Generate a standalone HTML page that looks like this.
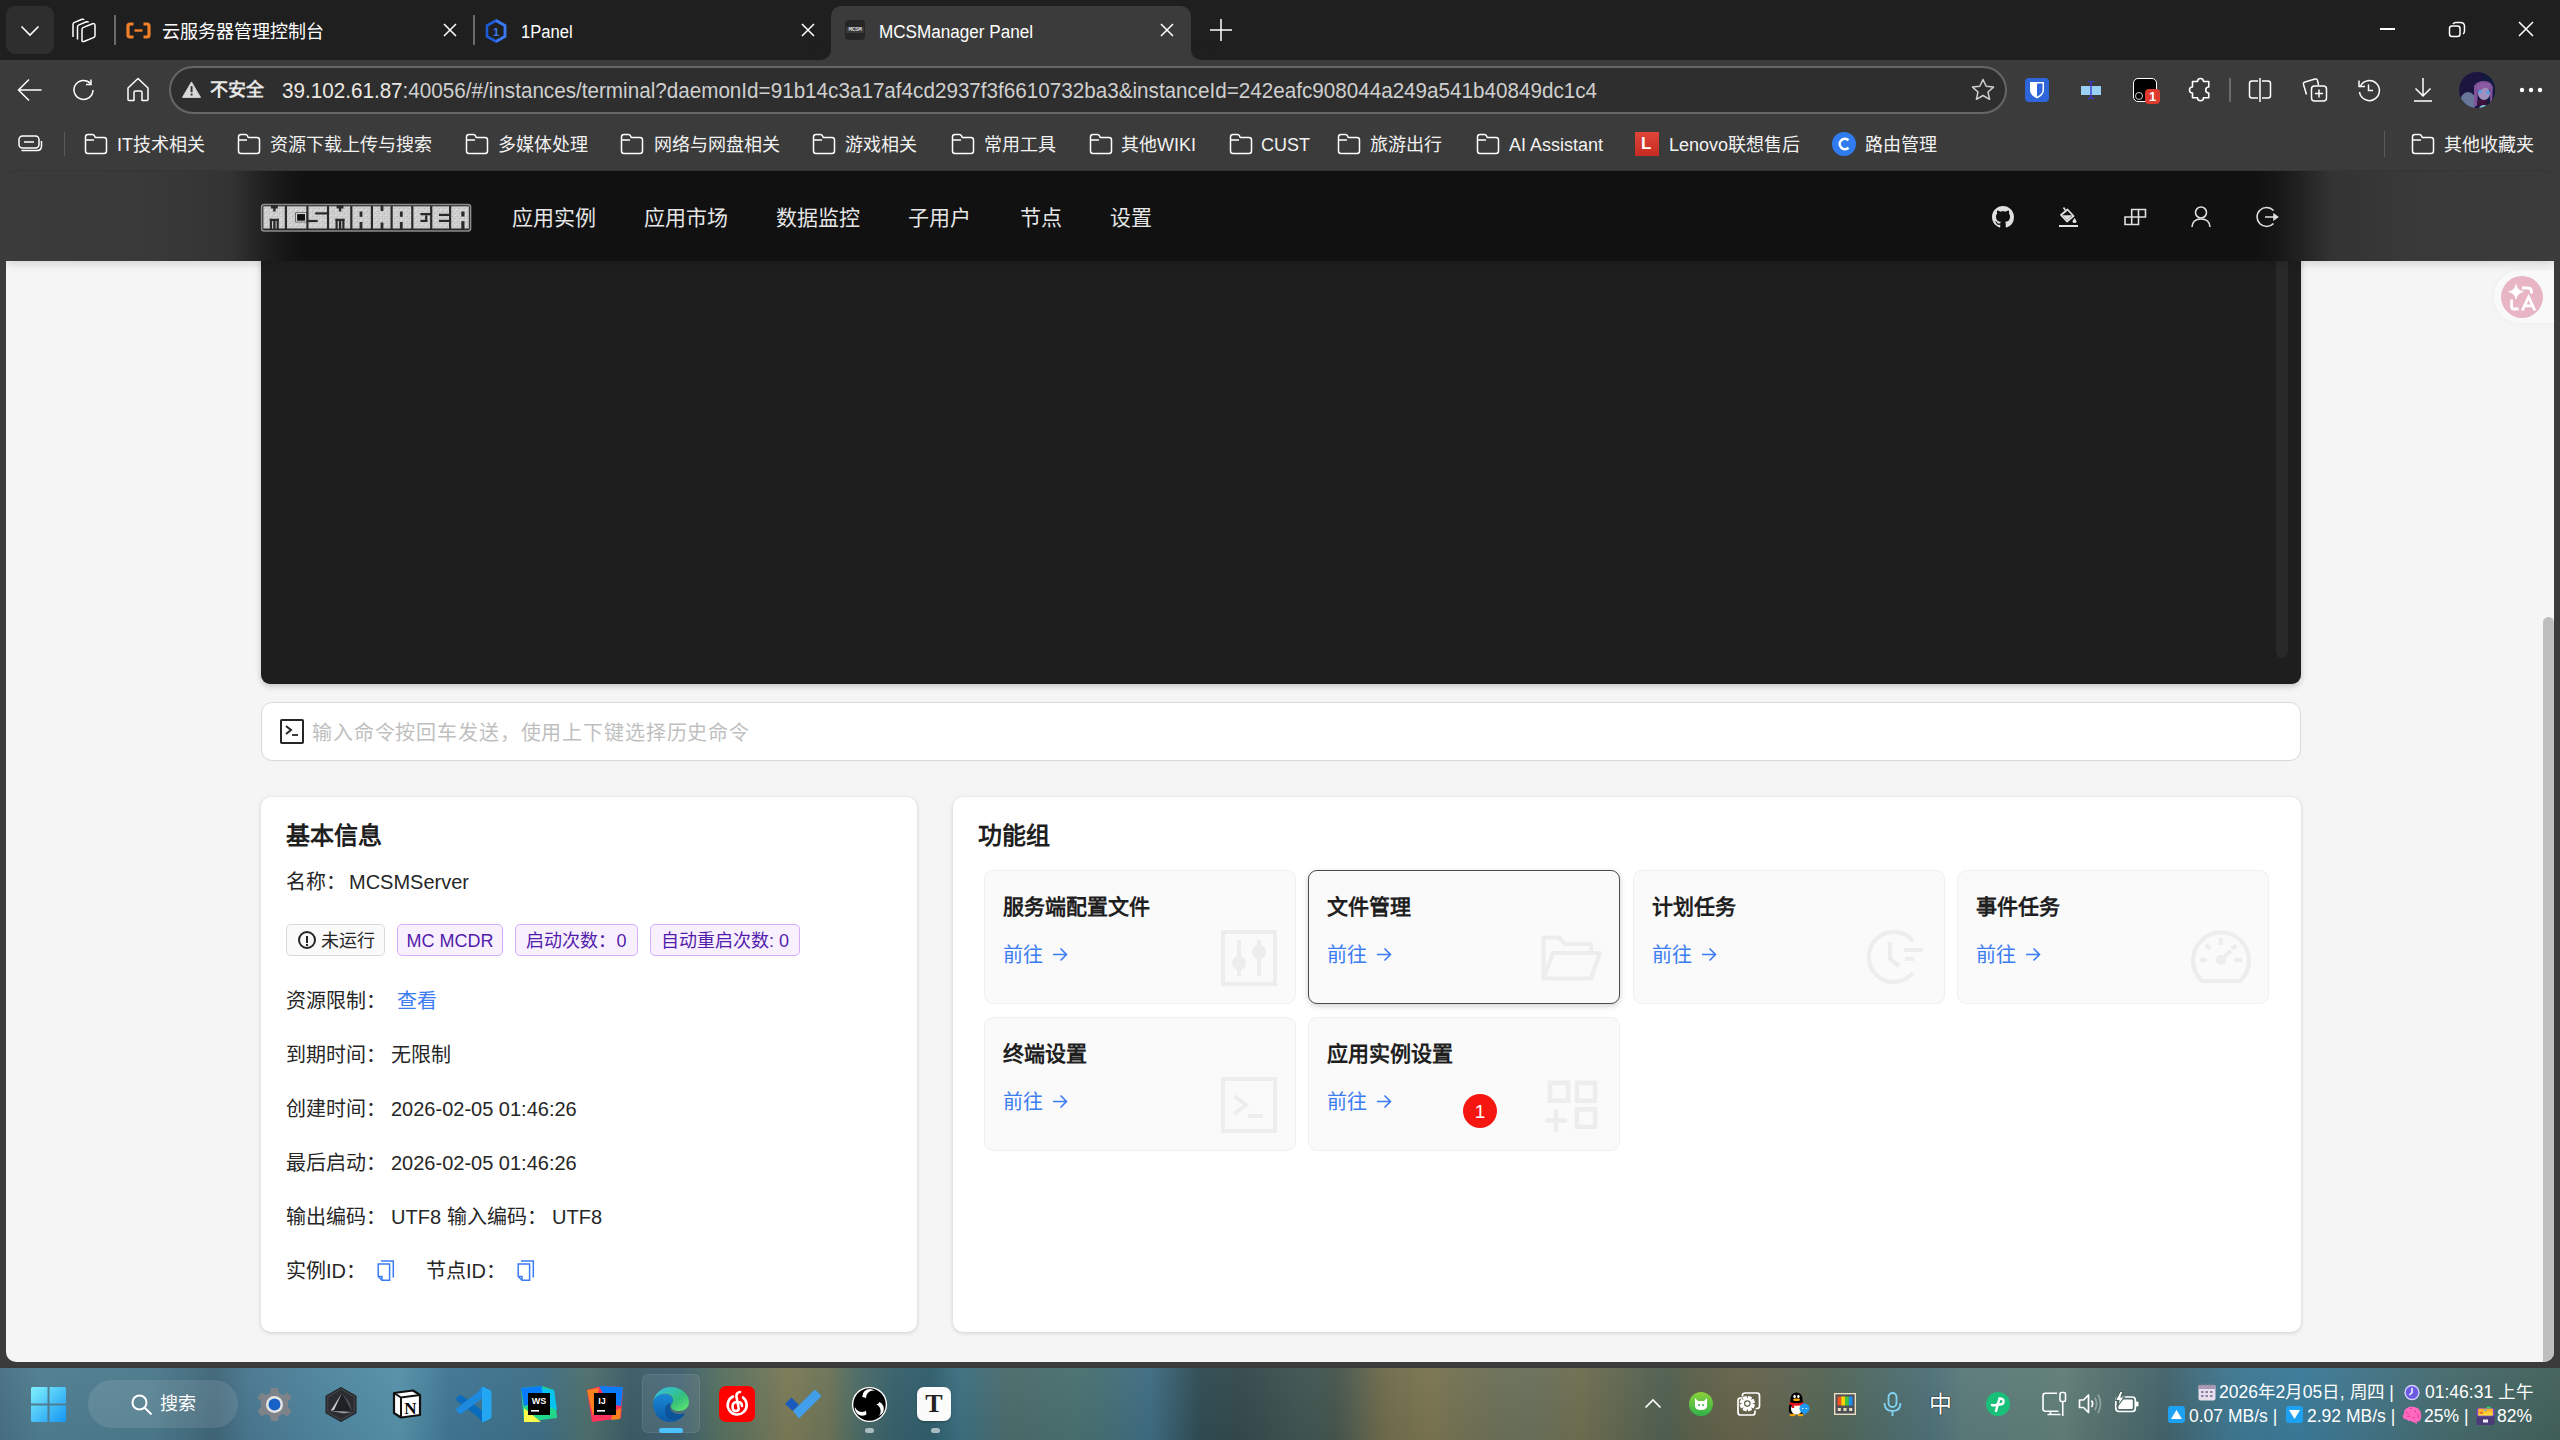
<!DOCTYPE html>
<html lang="zh-CN"><head><meta charset="utf-8">
<style>
*{box-sizing:border-box;margin:0;padding:0}
html,body{width:2560px;height:1440px;overflow:hidden;background:#1f1f1f;font-family:"Liberation Sans",sans-serif}
.a{position:absolute}
svg{display:block}
.w{color:#fff}
/* chrome */
#tabs{left:0;top:0;width:2560px;height:60px;background:#1f1f1f}
#tool{left:0;top:60px;width:2560px;height:1308px;background:#3b3b3b}
.tt{font-size:18px;line-height:20px;color:#fff;white-space:nowrap}
.bk{font-size:18px;line-height:20px;color:#f2f2f2;white-space:nowrap}
/* content */
#content{left:6px;top:170px;width:2548px;height:1192px;background:linear-gradient(#3b3b3b 0,#3b3b3b 91px,#f5f5f5 91px);border-radius:10px;overflow:hidden}
#hdr{z-index:2;box-shadow:0 3px 8px rgba(0,0,0,.13);left:0;top:0;width:2548px;height:91px;border-top:1px solid #353535;border-radius:10px 10px 0 0;background:linear-gradient(90deg,#3b3b3b 0px,#393939 150px,#333 225px,#222 255px,#161616 280px,#111111 300px,#111111 2250px,#161616 2270px,#222 2295px,#333 2325px,#393939 2400px,#3b3b3b 2548px)}
.nav{font-size:21px;line-height:24px;color:#e6e6e6;white-space:nowrap}
#taskbar{left:0;top:1368px;width:2560px;height:72px;background:linear-gradient(90deg,#477083 0px,#4f7d90 40px,#4c7a8c 150px,#3f6678 215px,#4a7890 250px,#4f86a0 330px,#5590a8 400px,#3f7592 450px,#3e6f86 540px,#4e6e6a 590px,#3a5c66 630px,#3f6070 680px,#55705f 720px,#7b7a56 790px,#6a7358 830px,#4a6a66 860px,#36606b 895px,#305d6b 930px,#3c6f80 960px,#4b6b6b 1010px,#48706f 1080px,#3e6c82 1150px,#2f4b52 1200px,#33494b 1240px,#3e5552 1300px,#45564e 1335px,#6f6c4c 1385px,#7a7450 1430px,#6e7056 1480px,#68705a 1530px,#6e6e50 1580px,#5e6650 1625px,#4f5f50 1665px,#5a604a 1690px,#66634a 1740px,#5f6450 1780px,#536656 1830px,#4f6a64 1870px,#4d7078 1930px,#5a7a7a 1963px,#5f7d76 2063px,#55706e 2104px,#43636a 2166px,#3e7790 2230px,#3a7a98 2300px,#41758a 2354px,#466a6c 2448px,#42605a 2560px)}

.card{background:#fff;border-radius:10px;box-shadow:0 1px 4px rgba(0,0,0,.16)}
.ct{font-size:24px;line-height:28px;font-weight:bold;color:#1f1f1f;white-space:nowrap}
.it{font-size:20px;line-height:24px;color:#262626;white-space:nowrap}
.tag{height:32px;border-radius:5px;font-size:18px;line-height:33px;white-space:nowrap;padding:0 10px;border:1px solid #d9d9d9;background:#fafafa;color:#262626}
.tp{border-color:#d3adf7;background:#f9f0ff;color:#531dab}
.sc{width:312px;height:134px;background:#fafafa;border:1px solid #f0f0f0;border-radius:9px;overflow:hidden}
.sct{left:18px;top:24px;font-size:21px;line-height:24px;font-weight:bold;color:#1f1f1f;white-space:nowrap}
.scl{left:18px;top:72px;font-size:20px;line-height:24px;color:#3b7cf2;white-space:nowrap}
i{font-style:normal;display:inline-block;width:1em;text-align:center}
.ph i{width:calc(1em + 0.86px)}
</style></head><body>
<div id="tabs" class="a">
  <div class="a" style="left:6px;top:6px;width:48px;height:48px;border-radius:9px;background:#2e2e2e"></div>
  <svg class="a" style="left:20px;top:25px" width="20" height="12" viewBox="0 0 20 12"><path d="M1.5 1.5 L10 10 L18.5 1.5" fill="none" stroke="#fff" stroke-width="1.6"/></svg>
  <svg class="a" style="left:71px;top:17px" width="26" height="26" viewBox="0 0 26 26" fill="none" stroke="#fff" stroke-width="1.5" stroke-linejoin="round"><path d="M2 20 V7.5 Q2 6 3.5 5.4 L11 2.3 Q12.5 1.8 13 3"/><path d="M6.5 22.5 V10 Q6.5 8.5 8 7.9 L15.5 4.8 Q17 4.3 17.5 5.5"/><path d="M11 23.5 V12.5 Q11 11 12.5 10.4 L21.5 6.8 Q24 6 24 8.5 V18.5 Q24 20 22.5 20.6 L13.5 24.3 Q11 25.2 11 23.5 Z"/></svg>
  <div class="a" style="left:114px;top:15px;width:2px;height:30px;background:#6b6b6b"></div>
  <svg class="a" style="left:126px;top:22px" width="25" height="17" viewBox="0 0 25 17"><path d="M7.5 2 H4 Q2 2 2 4 V13 Q2 15 4 15 H7.5" fill="none" stroke="#f0802a" stroke-width="3.2"/><path d="M17.5 2 H21 Q23 2 23 4 V13 Q23 15 21 15 H17.5" fill="none" stroke="#f0802a" stroke-width="3.2"/><rect x="8.5" y="7.3" width="8" height="2.4" fill="#f0802a"/></svg>
  <div class="a tt" style="left:162px;top:22px"><i>云</i><i>服</i><i>务</i><i>器</i><i>管</i><i>理</i><i>控</i><i>制</i><i>台</i></div>
  <svg class="a" style="left:443px;top:23px" width="14" height="14" viewBox="0 0 14 14"><path d="M1 1 L13 13 M13 1 L1 13" stroke="#fff" stroke-width="1.5"/></svg>
  <div class="a" style="left:473px;top:15px;width:2px;height:30px;background:#6b6b6b"></div>
  <svg class="a" style="left:485px;top:19px" width="22" height="24" viewBox="0 0 22 24"><path d="M11 1.5 L20 6.5 V17.5 L11 22.5 L2 17.5 V6.5 Z" fill="none" stroke="#1e5bd8" stroke-width="2.6"/><path d="M11 1.5 L20 6.5 V17.5 L11 22.5" fill="none" stroke="#3a78f0" stroke-width="2.6"/><text x="11" y="16.5" font-size="11" font-family="Liberation Sans" text-anchor="middle" fill="#3a78f0" font-weight="bold">1</text></svg>
  <div class="a tt" style="left:521px;top:22px;transform:scaleX(.92);transform-origin:0 0">1Panel</div>
  <svg class="a" style="left:801px;top:23px" width="14" height="14" viewBox="0 0 14 14"><path d="M1 1 L13 13 M13 1 L1 13" stroke="#fff" stroke-width="1.5"/></svg>
  <!-- active tab -->
  <div class="a" style="left:831px;top:6px;width:360px;height:54px;background:#3b3b3b;border-radius:10px 10px 0 0"></div>
  <div class="a" style="left:821px;top:50px;width:10px;height:10px;background:#3b3b3b"></div>
  <div class="a" style="left:811px;top:40px;width:20px;height:20px;background:#1f1f1f;border-radius:50%"></div>
  <div class="a" style="left:1191px;top:50px;width:10px;height:10px;background:#3b3b3b"></div>
  <div class="a" style="left:1191px;top:40px;width:20px;height:20px;background:#1f1f1f;border-radius:50%"></div>
  <div class="a" style="left:845px;top:20px;width:20px;height:20px;border-radius:4px;background:#262626"></div>
  <div class="a" style="left:846px;top:27px;width:18px;height:6px;background:#3a3a3a"></div>
  <div class="a" style="left:845px;top:27px;width:20px;text-align:center;font:bold 6px/6px 'Liberation Mono',monospace;color:#d8d8d8;letter-spacing:-0.3px">MCSM</div>
  <div class="a tt" style="left:879px;top:22px;transform:scaleX(.95);transform-origin:0 0">MCSManager Panel</div>
  <svg class="a" style="left:1160px;top:23px" width="14" height="14" viewBox="0 0 14 14"><path d="M1 1 L13 13 M13 1 L1 13" stroke="#fff" stroke-width="1.5"/></svg>
  <svg class="a" style="left:1209px;top:18px" width="24" height="24" viewBox="0 0 24 24"><path d="M12 1 V23 M1 12 H23" stroke="#fff" stroke-width="1.5"/></svg>
  <!-- window controls -->
  <div class="a" style="left:2380px;top:28px;width:15px;height:2px;background:#fff"></div>
  <svg class="a" style="left:2448px;top:21px" width="18" height="17" viewBox="0 0 18 17" fill="none" stroke="#fff" stroke-width="1.5"><rect x="1.5" y="5" width="10.5" height="10.5" rx="2.5"/><path d="M5 3 Q6 1.5 8 1.5 H12.5 Q16.5 1.5 16.5 5.5 V10 Q16.5 12 15 13"/></svg>
  <svg class="a" style="left:2518px;top:21px" width="16" height="16" viewBox="0 0 16 16"><path d="M1 1 L15 15 M15 1 L1 15" stroke="#fff" stroke-width="1.5"/></svg>
</div>
<div id="tool" class="a">
  <svg class="a" style="left:17px;top:18px" width="26" height="24" viewBox="0 0 26 24" fill="none" stroke="#fff" stroke-width="1.5"><path d="M1.5 12 H24.5 M12 1.5 L1.5 12 L12 22.5"/></svg>
  <svg class="a" style="left:72px;top:18px" width="24" height="24" viewBox="0 0 24 24" fill="none" stroke="#fff" stroke-width="1.5"><path d="M21 12 A9.5 9.5 0 1 1 18.5 5.5"/><path d="M19 1.5 V6.5 H14"/></svg>
  <svg class="a" style="left:126px;top:17px" width="24" height="25" viewBox="0 0 24 25" fill="none" stroke="#fff" stroke-width="1.5" stroke-linejoin="round"><path d="M12 1.5 L22 11 V22.5 Q22 23.5 21 23.5 H16 V15.5 Q16 14 14.5 14 H9.5 Q8 14 8 15.5 V23.5 H3 Q2 23.5 2 22.5 V11 Z"/></svg>
  <div class="a" style="left:169px;top:6px;width:1838px;height:48px;border-radius:24px;background:#2e2e2e;border:2px solid #666"></div>
  <svg class="a" style="left:182px;top:21px" width="19" height="17.3" viewBox="0 0 22 20"><path d="M11 1 L21.5 19 H0.5 Z" fill="#d9d9d9" stroke="#d9d9d9" stroke-width="1" stroke-linejoin="round"/><rect x="10" y="6" width="2.2" height="7" fill="#2e2e2e"/><rect x="10" y="14.6" width="2.2" height="2.2" fill="#2e2e2e"/></svg>
  <div class="a" style="left:210px;top:19px;font-size:18px;line-height:22px;font-weight:bold;color:#e6e6e6"><i>不</i><i>安</i><i>全</i></div>
  <div class="a" id="url" style="left:282px;top:18px;font-size:20.67px;line-height:24px;color:#ebe8e2;white-space:nowrap;transform:scaleY(1.08)">39.102.61.87<span style="color:#cfcfcf">:40056/#/instances/terminal?daemonId=91b14c3a17af4cd2937f3f6610732ba3&amp;instanceId=242eafc908044a249a541b40849dc1c4</span></div>
  <svg class="a" style="left:1970px;top:17px" width="26" height="26" viewBox="0 0 26 26"><path d="M13 2.5 L16.2 9.3 L23.5 10.1 L18 15 L19.6 22.3 L13 18.5 L6.4 22.3 L8 15 L2.5 10.1 L9.8 9.3 Z" fill="none" stroke="#d0d0d0" stroke-width="1.5" stroke-linejoin="round"/></svg>
  <!-- extensions -->
  <div class="a" style="left:2025px;top:18px;width:24px;height:24px;border-radius:4px;background:#2f65db"></div>
  <svg class="a" style="left:2029px;top:21px" width="16" height="18" viewBox="0 0 16 18"><path d="M1 1 H15 V9 Q15 14 8 17.5 Q1 14 1 9 Z" fill="#fff"/><path d="M8 2.5 H13.5 V9 Q13.5 13 8 15.8 Z" fill="#2f65db"/></svg>
  <svg class="a" style="left:2080px;top:20px" width="22" height="20" viewBox="0 0 22 20"><rect x="1" y="6" width="20" height="9" fill="#9bd0f5"/><path d="M11 2 V18 M8 1 Q11 3 14 1 M8 19 Q11 17 14 19" stroke="#3a3ad0" stroke-width="1.4" fill="none"/></svg>
  <div class="a" style="left:2133px;top:18px;width:24px;height:24px;border-radius:5px;background:#000;border:1.5px solid #fff"></div>
  <div class="a" style="left:2135px;top:32px;width:8px;height:8px;border-radius:50%;border:1.3px solid #ccc"></div>
  <div class="a" style="left:2145px;top:29px;width:15px;height:15px;border-radius:4px;background:#e03a2f;color:#fff;font:bold 13px/15px 'Liberation Sans';text-align:center">1</div>
  <svg class="a" style="left:2186px;top:16px" width="26" height="28" viewBox="0 0 26 28" fill="none" stroke="#fff" stroke-width="1.6" stroke-linejoin="round"><path d="M6.5 5.5 H11.5 A3 3 0 0 1 17.5 5.5 H22.75 V11 A3 3 0 0 0 22.75 17 V21.75 H17.5 A3 3 0 0 1 11.5 21.75 H6.5 V17 A3 3 0 0 1 6.5 11 Z"/></svg>
  <div class="a" style="left:2229px;top:18px;width:2px;height:24px;background:#6b6b6b"></div>
  <svg class="a" style="left:2248px;top:17px" width="24" height="26" viewBox="0 0 24 26" fill="none" stroke="#fff" stroke-width="1.5"><path d="M10 4 H4 Q1.5 4 1.5 6.5 V18.5 Q1.5 21 4 21 H10 M14 4 H20 Q22.5 4 22.5 6.5 V18.5 Q22.5 21 20 21 H14 M12 1 V25"/></svg>
  <svg class="a" style="left:2302px;top:17px" width="27" height="26" viewBox="0 0 27 26" fill="none" stroke="#fff" stroke-width="1.5" stroke-linejoin="round"><path d="M4.5 17.5 L1.5 7.5 Q1 5.5 3 5 L13 2 Q15 1.5 15.5 3.5 L16.5 8"/><rect x="9.5" y="9" width="15" height="15" rx="3"/><path d="M17 12.5 V20.5 M13 16.5 H21"/></svg>
  <svg class="a" style="left:2356px;top:17px" width="26" height="26" viewBox="0 0 26 26" fill="none" stroke="#fff" stroke-width="1.5"><path d="M4.5 9 A10 10 0 1 1 3.5 15"/><path d="M3 3.5 V9.5 H9"/><path d="M12.5 7.5 V13.5 H17"/></svg>
  <svg class="a" style="left:2412px;top:17px" width="22" height="26" viewBox="0 0 22 26" fill="none" stroke="#fff" stroke-width="1.5"><path d="M11 1 V19 M3.5 11.5 L11 19 L18.5 11.5 M2 24 H20"/></svg>
  <svg class="a" style="left:2459px;top:12px" width="36" height="36" viewBox="0 0 36 36"><defs><clipPath id="avc"><circle cx="18" cy="18" r="18"/></clipPath></defs><g clip-path="url(#avc)"><rect width="36" height="36" fill="#1b1540"/><rect x="24" y="0" width="12" height="36" fill="#121a3e"/><ellipse cx="9" cy="30" rx="8" ry="10" fill="#66779a"/><path d="M15 14 Q18 9 25 9 Q32 9 34 15 L33 30 L31 30 L31 18 L19 18 L18 34 L15 34 Z" fill="#80529a"/><ellipse cx="25" cy="21.5" rx="6" ry="6.5" fill="#9f90c0"/><path d="M18 13 Q24 9 31 12 L31 17 Q26 14 22 18 L18 18 Z" fill="#8a5aa2"/><ellipse cx="21" cy="19.5" rx="1.8" ry="1.5" fill="#4da3ea"/><ellipse cx="29" cy="20.5" rx="1.8" ry="1.5" fill="#4da3ea"/><rect x="19" y="28" width="9" height="6" fill="#3c1238"/><ellipse cx="25" cy="37" rx="5" ry="4" fill="#86c6e2"/><ellipse cx="32" cy="35" rx="4" ry="3" fill="#5d6e8c"/></g></svg>
  <svg class="a" style="left:2518px;top:27px" width="26" height="6" viewBox="0 0 26 6" fill="#fff"><circle cx="4" cy="3" r="2.2"/><circle cx="13" cy="3" r="2.2"/><circle cx="22" cy="3" r="2.2"/></svg>
<svg class="a" style="left:18px;top:75px" width="25" height="17" viewBox="0 0 25 17" fill="none" stroke="#fff" stroke-width="1.5"><rect x="1" y="1" width="20" height="12" rx="3.5"/><path d="M6 7 H16"/><path d="M3.5 15.5 H19 Q23.5 15.5 23.5 11 V6"/></svg><div class="a" style="left:64px;top:72px;width:1px;height:24px;background:#5a5a5a"></div><svg class="a" style="left:84px;top:73px" width="24" height="22" viewBox="0 0 24 22" fill="none" stroke="#fff" stroke-width="1.5" stroke-linejoin="round"><path d="M1.5 4 Q1.5 1.5 4 1.5 H8.5 Q9.8 1.5 10.5 2.8 L11.2 4.5 H20 Q22.5 4.5 22.5 7 V18 Q22.5 20.5 20 20.5 H4 Q1.5 20.5 1.5 18 Z M1.5 7 H10"/></svg><div class="a bk" style="left:117px;top:75px">IT<i>技</i><i>术</i><i>相</i><i>关</i></div><svg class="a" style="left:237px;top:73px" width="24" height="22" viewBox="0 0 24 22" fill="none" stroke="#fff" stroke-width="1.5" stroke-linejoin="round"><path d="M1.5 4 Q1.5 1.5 4 1.5 H8.5 Q9.8 1.5 10.5 2.8 L11.2 4.5 H20 Q22.5 4.5 22.5 7 V18 Q22.5 20.5 20 20.5 H4 Q1.5 20.5 1.5 18 Z M1.5 7 H10"/></svg><div class="a bk" style="left:270px;top:75px"><i>资</i><i>源</i><i>下</i><i>载</i><i>上</i><i>传</i><i>与</i><i>搜</i><i>索</i></div><svg class="a" style="left:465px;top:73px" width="24" height="22" viewBox="0 0 24 22" fill="none" stroke="#fff" stroke-width="1.5" stroke-linejoin="round"><path d="M1.5 4 Q1.5 1.5 4 1.5 H8.5 Q9.8 1.5 10.5 2.8 L11.2 4.5 H20 Q22.5 4.5 22.5 7 V18 Q22.5 20.5 20 20.5 H4 Q1.5 20.5 1.5 18 Z M1.5 7 H10"/></svg><div class="a bk" style="left:498px;top:75px"><i>多</i><i>媒</i><i>体</i><i>处</i><i>理</i></div><svg class="a" style="left:620px;top:73px" width="24" height="22" viewBox="0 0 24 22" fill="none" stroke="#fff" stroke-width="1.5" stroke-linejoin="round"><path d="M1.5 4 Q1.5 1.5 4 1.5 H8.5 Q9.8 1.5 10.5 2.8 L11.2 4.5 H20 Q22.5 4.5 22.5 7 V18 Q22.5 20.5 20 20.5 H4 Q1.5 20.5 1.5 18 Z M1.5 7 H10"/></svg><div class="a bk" style="left:654px;top:75px"><i>网</i><i>络</i><i>与</i><i>网</i><i>盘</i><i>相</i><i>关</i></div><svg class="a" style="left:812px;top:73px" width="24" height="22" viewBox="0 0 24 22" fill="none" stroke="#fff" stroke-width="1.5" stroke-linejoin="round"><path d="M1.5 4 Q1.5 1.5 4 1.5 H8.5 Q9.8 1.5 10.5 2.8 L11.2 4.5 H20 Q22.5 4.5 22.5 7 V18 Q22.5 20.5 20 20.5 H4 Q1.5 20.5 1.5 18 Z M1.5 7 H10"/></svg><div class="a bk" style="left:845px;top:75px"><i>游</i><i>戏</i><i>相</i><i>关</i></div><svg class="a" style="left:951px;top:73px" width="24" height="22" viewBox="0 0 24 22" fill="none" stroke="#fff" stroke-width="1.5" stroke-linejoin="round"><path d="M1.5 4 Q1.5 1.5 4 1.5 H8.5 Q9.8 1.5 10.5 2.8 L11.2 4.5 H20 Q22.5 4.5 22.5 7 V18 Q22.5 20.5 20 20.5 H4 Q1.5 20.5 1.5 18 Z M1.5 7 H10"/></svg><div class="a bk" style="left:984px;top:75px"><i>常</i><i>用</i><i>工</i><i>具</i></div><svg class="a" style="left:1089px;top:73px" width="24" height="22" viewBox="0 0 24 22" fill="none" stroke="#fff" stroke-width="1.5" stroke-linejoin="round"><path d="M1.5 4 Q1.5 1.5 4 1.5 H8.5 Q9.8 1.5 10.5 2.8 L11.2 4.5 H20 Q22.5 4.5 22.5 7 V18 Q22.5 20.5 20 20.5 H4 Q1.5 20.5 1.5 18 Z M1.5 7 H10"/></svg><div class="a bk" style="left:1121px;top:75px"><i>其</i><i>他</i>WIKI</div><svg class="a" style="left:1229px;top:73px" width="24" height="22" viewBox="0 0 24 22" fill="none" stroke="#fff" stroke-width="1.5" stroke-linejoin="round"><path d="M1.5 4 Q1.5 1.5 4 1.5 H8.5 Q9.8 1.5 10.5 2.8 L11.2 4.5 H20 Q22.5 4.5 22.5 7 V18 Q22.5 20.5 20 20.5 H4 Q1.5 20.5 1.5 18 Z M1.5 7 H10"/></svg><div class="a bk" style="left:1261px;top:75px">CUST</div><svg class="a" style="left:1337px;top:73px" width="24" height="22" viewBox="0 0 24 22" fill="none" stroke="#fff" stroke-width="1.5" stroke-linejoin="round"><path d="M1.5 4 Q1.5 1.5 4 1.5 H8.5 Q9.8 1.5 10.5 2.8 L11.2 4.5 H20 Q22.5 4.5 22.5 7 V18 Q22.5 20.5 20 20.5 H4 Q1.5 20.5 1.5 18 Z M1.5 7 H10"/></svg><div class="a bk" style="left:1370px;top:75px"><i>旅</i><i>游</i><i>出</i><i>行</i></div><svg class="a" style="left:1476px;top:73px" width="24" height="22" viewBox="0 0 24 22" fill="none" stroke="#fff" stroke-width="1.5" stroke-linejoin="round"><path d="M1.5 4 Q1.5 1.5 4 1.5 H8.5 Q9.8 1.5 10.5 2.8 L11.2 4.5 H20 Q22.5 4.5 22.5 7 V18 Q22.5 20.5 20 20.5 H4 Q1.5 20.5 1.5 18 Z M1.5 7 H10"/></svg><div class="a bk" style="left:1509px;top:75px">AI Assistant</div><svg class="a" style="left:2411px;top:73px" width="24" height="22" viewBox="0 0 24 22" fill="none" stroke="#fff" stroke-width="1.5" stroke-linejoin="round"><path d="M1.5 4 Q1.5 1.5 4 1.5 H8.5 Q9.8 1.5 10.5 2.8 L11.2 4.5 H20 Q22.5 4.5 22.5 7 V18 Q22.5 20.5 20 20.5 H4 Q1.5 20.5 1.5 18 Z M1.5 7 H10"/></svg><div class="a bk" style="left:2444px;top:75px"><i>其</i><i>他</i><i>收</i><i>藏</i><i>夹</i></div><div class="a" style="left:1635px;top:72px;width:24px;height:24px;background:linear-gradient(#e0453a,#c62b22)"></div><div class="a" style="left:1641px;top:73px;font:bold 17px/22px 'Liberation Sans';color:#fff">L</div><div class="a bk" style="left:1669px;top:75px">Lenovo<i>联</i><i>想</i><i>售</i><i>后</i></div><div class="a" style="left:1832px;top:72px;width:24px;height:24px;border-radius:50%;background:#2f7cf0"></div><svg class="a" style="left:1837px;top:77px" width="14" height="14" viewBox="0 0 14 14"><path d="M11.5 3.2 A5.2 5.2 0 1 0 11.5 10.8" fill="none" stroke="#fff" stroke-width="2.6"/></svg><div class="a bk" style="left:1865px;top:75px"><i>路</i><i>由</i><i>管</i><i>理</i></div><div class="a" style="left:2384px;top:71px;width:1px;height:26px;background:#5a5a5a"></div>
</div>
<div id="content" class="a">
  <div id="hdr" class="a">
<svg class="a" style="left:249px;top:29px" width="230" height="36" viewBox="0 0 230 36"><defs><pattern id="nz" width="5" height="5" patternUnits="userSpaceOnUse"><rect width="5" height="5" fill="#cdcdcd"/><rect x="0" y="0" width="1" height="1" fill="#e4e4e4"/><rect x="2" y="1" width="1" height="1" fill="#b5b5b5"/><rect x="4" y="3" width="1" height="1" fill="#bababa"/><rect x="1" y="4" width="1" height="1" fill="#dedede"/><rect x="3" y="2" width="1" height="1" fill="#d8d8d8"/></pattern></defs><g transform="translate(-255,-200)"><rect x="261.6" y="204.4" width="209" height="26.6" rx="2.5" fill="#2b282c" stroke="#8c8c8c" stroke-width="1.5"/><g fill="url(#nz)"><rect x="263.4" y="206.3" width="21.4" height="22.2"/><rect x="287.0" y="206.3" width="19.3" height="22.2"/><rect x="308.5" y="206.3" width="18.4" height="22.2"/><rect x="329.1" y="206.3" width="21.1" height="22.2"/><rect x="352.4" y="206.3" width="18.4" height="22.2"/><rect x="373.0" y="206.3" width="17.5" height="22.2"/><rect x="392.7" y="206.3" width="18.5" height="22.2"/><rect x="413.4" y="206.3" width="16.7" height="22.2"/><rect x="432.3" y="206.3" width="16.7" height="22.2"/><rect x="451.2" y="206.3" width="17.6" height="22.2"/></g><g fill="#2b282c"><rect x="270.9" y="205.0" width="6.9" height="3.5"/><rect x="273.2" y="205.0" width="2.4" height="6.5"/><rect x="269.8" y="218.8" width="2.2" height="10.2"/><rect x="276.6" y="218.8" width="2.2" height="10.2"/><rect x="269.8" y="218.8" width="9.0" height="2.2"/><rect x="273.2" y="221.0" width="2.4" height="8.0"/><rect x="295.4" y="212.5" width="11.2" height="9.8"/><rect x="315.2" y="212.3" width="13.3" height="2.2"/><rect x="307.0" y="219.9" width="10.7" height="2.2"/><rect x="336.6" y="205.0" width="6.9" height="3.5"/><rect x="338.9" y="205.0" width="2.4" height="6.5"/><rect x="335.5" y="218.8" width="2.2" height="10.2"/><rect x="342.3" y="218.8" width="2.2" height="10.2"/><rect x="335.5" y="218.8" width="9.0" height="2.2"/><rect x="338.9" y="221.0" width="2.4" height="8.0"/><rect x="359.6" y="211.5" width="2.8" height="5.3"/><rect x="359.6" y="222.0" width="2.8" height="7.0"/><rect x="380.6" y="205.0" width="2.8" height="6.0"/><rect x="380.6" y="222.5" width="2.8" height="6.5"/><rect x="399.9" y="211.5" width="2.8" height="5.3"/><rect x="399.9" y="222.0" width="2.8" height="7.0"/><rect x="420.4" y="213.0" width="11.6" height="2.3"/><rect x="420.4" y="219.8" width="6.9" height="2.2"/><rect x="425.1" y="215.3" width="2.2" height="6.7"/><rect x="439.0" y="213.8" width="12.0" height="2.2"/><rect x="439.0" y="219.8" width="12.0" height="2.2"/><rect x="461.3" y="211.5" width="3.2" height="5.0"/><rect x="461.3" y="221.2" width="3.2" height="7.8"/></g><rect x="296.6" y="213.6" width="9" height="7.6" fill="#111" stroke="#e8e8e8" stroke-width="1"/></g></svg>
  <div class="a nav" style="left:506px;top:35px"><i>应</i><i>用</i><i>实</i><i>例</i></div>
  <div class="a nav" style="left:638px;top:35px"><i>应</i><i>用</i><i>市</i><i>场</i></div>
  <div class="a nav" style="left:770px;top:35px"><i>数</i><i>据</i><i>监</i><i>控</i></div>
  <div class="a nav" style="left:902px;top:35px"><i>子</i><i>用</i><i>户</i></div>
  <div class="a nav" style="left:1014px;top:35px"><i>节</i><i>点</i></div>
  <div class="a nav" style="left:1104px;top:35px"><i>设</i><i>置</i></div>
  <svg class="a" style="left:1986px;top:35px" width="22" height="22" viewBox="0 0 16 16"><path fill="#e0e0e0" d="M8 0C3.58 0 0 3.58 0 8c0 3.54 2.29 6.53 5.47 7.59.4.07.55-.17.55-.38 0-.19-.01-.82-.01-1.49-2.01.37-2.53-.49-2.69-.94-.09-.23-.48-.94-.82-1.13-.28-.15-.68-.52-.01-.53.63-.01 1.08.58 1.23.82.72 1.21 1.87.87 2.33.66.07-.52.28-.87.51-1.07-1.78-.2-3.64-.89-3.64-3.95 0-.87.31-1.59.82-2.15-.08-.2-.36-1.02.08-2.12 0 0 .67-.21 2.2.82.64-.18 1.32-.27 2-.27.68 0 1.36.09 2 .27 1.53-1.04 2.2-.82 2.2-.82.44 1.1.16 1.92.08 2.12.51.56.82 1.27.82 2.15 0 3.07-1.87 3.75-3.65 3.95.29.25.54.73.54 1.48 0 1.07-.01 1.93-.01 2.2 0 .21.15.46.55.38A8.013 8.013 0 0016 8c0-4.42-3.58-8-8-8z"/></svg>
  <svg class="a" style="left:2052px;top:35px" width="22" height="22" viewBox="0 0 22 22"><path d="M5.5 1.5 L7.2 4" stroke="#e0e0e0" stroke-width="1.6"/><path d="M9.5 3.5 L15.5 10 L9 15.5 L3 9 Z" fill="none" stroke="#e0e0e0" stroke-width="1.8" stroke-linejoin="round"/><path d="M4.2 9.2 H14.3 L9 14.2 Z" fill="#e0e0e0"/><path d="M16.5 12 Q18.5 14.5 18.5 15.5 Q18.5 17 16.5 17 Q14.5 17 14.5 15.5 Q14.5 14.5 16.5 12Z" fill="#e0e0e0"/><rect x="1" y="19" width="19" height="2" fill="#e0e0e0"/></svg>
  <svg class="a" style="left:2118px;top:37px" width="23" height="18" viewBox="0 0 23 18" fill="none" stroke="#e0e0e0" stroke-width="1.6"><path d="M1 9 H14.5 V16.5 H1 Z M7.7 9 V16.5 M7.7 9 V1.5 H21.5 V9 H7.7 M14.5 1.5 V9"/></svg>
  <svg class="a" style="left:2185px;top:35px" width="20" height="22" viewBox="0 0 20 22" fill="none" stroke="#e0e0e0" stroke-width="1.6"><circle cx="10" cy="6.5" r="5.5"/><path d="M1 21 Q1.5 13 10 13 Q18.5 13 19 21"/></svg>
  <svg class="a" style="left:2250px;top:35px" width="23" height="22" viewBox="0 0 23 22" fill="none" stroke="#e0e0e0" stroke-width="1.6"><path d="M17.5 4.5 A9.5 9.5 0 1 0 17.5 17.5"/><path d="M9 11 H21"/><path d="M18 8.5 L21.5 11 L18 13.5 Z" fill="#e0e0e0"/></svg>
</div>

  <div class="a" style="left:255px;top:0;width:2040px;height:514px;background:#1e1e1e;border-radius:0 0 9px 9px;box-shadow:0 2px 6px rgba(0,0,0,.22)"></div>
  <div class="a" style="left:2270px;top:60px;width:12px;height:428px;background:#292929;border-radius:6px"></div>
  <!-- input -->
  <div class="a" style="left:255px;top:532px;width:2040px;height:59px;background:#fff;border:1px solid #d9d9d9;border-radius:11px"></div>
  <svg class="a" style="left:274px;top:549px" width="24" height="25" viewBox="0 0 24 25" fill="none" stroke="#262626"><rect x="1" y="1" width="22" height="23" rx="0.8" stroke-width="2"/><path d="M6 7 L11 11 L6 15" stroke-width="2"/><path d="M12 16 H18" stroke-width="1.8"/></svg>
  <div class="a ph" style="left:306px;top:551px;font-size:20px;line-height:24px;letter-spacing:0.86px;color:#bfbfbf;white-space:nowrap"><i>输</i><i>入</i><i>命</i><i>令</i><i>按</i><i>回</i><i>车</i><i>发</i><i>送</i><i>，</i><i>使</i><i>用</i><i>上</i><i>下</i><i>键</i><i>选</i><i>择</i><i>历</i><i>史</i><i>命</i><i>令</i></div>
  <!-- info card -->
  <div class="a card" style="left:255px;top:627px;width:656px;height:535px">
    <div class="a ct" style="left:25px;top:25px"><i>基</i><i>本</i><i>信</i><i>息</i></div>
    <div class="a it" style="left:25px;top:73px"><i>名</i><i>称</i><i>：</i></div><div class="a it" style="left:88px;top:73px">MCSMServer</div>
    <div class="a tag" style="left:25px;top:127px;padding:0 0 0 11px;width:99px"><span style="display:inline-block;vertical-align:-2px;width:18px;height:18px;border:2px solid #262626;border-radius:50%;position:relative;margin-right:5px"><span style="position:absolute;left:5.9px;top:2.5px;width:2.2px;height:7px;background:#262626"></span><span style="position:absolute;left:5.9px;top:10.8px;width:2.2px;height:2.2px;background:#262626"></span></span><i>未</i><i>运</i><i>行</i></div>
    <div class="a tag tp" style="left:136px;top:127px;width:106px;text-align:center;padding:0">MC MCDR</div>
    <div class="a tag tp" style="left:254px;top:127px;width:123px;text-align:center;padding:0"><i>启</i><i>动</i><i>次</i><i>数</i><i>：</i>0</div>
    <div class="a tag tp" style="left:389px;top:127px;width:150px;text-align:center;padding:0"><i>自</i><i>动</i><i>重</i><i>启</i><i>次</i><i>数</i>: 0</div>
    <div class="a it" style="left:25px;top:192px"><i>资</i><i>源</i><i>限</i><i>制</i><i>：</i></div>
    <div class="a it" style="left:136px;top:192px;color:#3b7cf2"><i>查</i><i>看</i></div>
    <div class="a it" style="left:25px;top:246px"><i>到</i><i>期</i><i>时</i><i>间</i><i>：</i></div><div class="a it" style="left:130px;top:246px"><i>无</i><i>限</i><i>制</i></div>
    <div class="a it" style="left:25px;top:300px"><i>创</i><i>建</i><i>时</i><i>间</i><i>：</i></div><div class="a it" style="left:130px;top:300px">2026-02-05 01:46:26</div>
    <div class="a it" style="left:25px;top:354px"><i>最</i><i>后</i><i>启</i><i>动</i><i>：</i></div><div class="a it" style="left:130px;top:354px">2026-02-05 01:46:26</div>
    <div class="a it" style="left:25px;top:408px"><i>输</i><i>出</i><i>编</i><i>码</i><i>：</i></div><div class="a it" style="left:130px;top:408px">UTF8</div><div class="a it" style="left:186px;top:408px"><i>输</i><i>入</i><i>编</i><i>码</i><i>：</i></div><div class="a it" style="left:291px;top:408px">UTF8</div>
    <div class="a it" style="left:25px;top:462px"><i>实</i><i>例</i>ID<i>：</i></div>
    <svg class="a" style="left:116px;top:463px" width="18" height="22" viewBox="0 0 18 22" fill="none" stroke="#3b7cf2" stroke-width="1.5"><path d="M4 1 H16.3 V17.5"/><path d="M1.2 4 H12.6 V20.3 H5 L1.2 16.5 Z"/><path d="M1.2 16.5 H5 V20.3"/></svg>
    <div class="a it" style="left:165px;top:462px"><i>节</i><i>点</i>ID<i>：</i></div>
    <svg class="a" style="left:256px;top:463px" width="18" height="22" viewBox="0 0 18 22" fill="none" stroke="#3b7cf2" stroke-width="1.5"><path d="M4 1 H16.3 V17.5"/><path d="M1.2 4 H12.6 V20.3 H5 L1.2 16.5 Z"/><path d="M1.2 16.5 H5 V20.3"/></svg>
  </div>
  <!-- function card -->
  <div class="a card" style="left:947px;top:627px;width:1348px;height:535px">
    <div class="a ct" style="left:25px;top:25px"><i>功</i><i>能</i><i>组</i></div>
<div class="a sc" style="left:31px;top:73px"><div class="a sct"><i>服</i><i>务</i><i>端</i><i>配</i><i>置</i><i>文</i><i>件</i></div><div class="a scl"><i>前</i><i>往</i></div><svg class="a" style="left:67px;top:76px" width="16" height="15" viewBox="0 0 16 15" fill="none" stroke="#3b7cf2" stroke-width="1.6"><path d="M1 7.5 H14.5 M8.5 1.5 L14.5 7.5 L8.5 13.5"/></svg><svg class="a" style="left:236px;top:59px" width="56" height="56" viewBox="0 0 56 56" fill="none" stroke="#ededed" stroke-width="4"><rect x="2" y="2" width="52" height="52"/><path d="M18 10 V46 M38 10 V46" stroke-width="4"/><circle cx="18" cy="33" r="5" fill="#ededed"/><circle cx="38" cy="22" r="5" fill="#ededed"/></svg></div><div class="a sc" style="left:355px;top:73px;border:1.5px solid #4a4a4a;box-shadow:0 2px 6px rgba(0,0,0,.18)"><div class="a sct"><i>文</i><i>件</i><i>管</i><i>理</i></div><div class="a scl"><i>前</i><i>往</i></div><svg class="a" style="left:67px;top:76px" width="16" height="15" viewBox="0 0 16 15" fill="none" stroke="#3b7cf2" stroke-width="1.6"><path d="M1 7.5 H14.5 M8.5 1.5 L14.5 7.5 L8.5 13.5"/></svg><svg class="a" style="left:232px;top:64px" width="62" height="46" viewBox="0 0 62 46" fill="none" stroke="#ededed" stroke-width="4.2" stroke-linejoin="round"><path d="M2.5 43.5 V2.5 H18 L24 9 H50 V18"/><path d="M2.5 43.5 L12 18 H59 L50 43.5 Z"/></svg></div><div class="a sc" style="left:680px;top:73px"><div class="a sct"><i>计</i><i>划</i><i>任</i><i>务</i></div><div class="a scl"><i>前</i><i>往</i></div><svg class="a" style="left:67px;top:76px" width="16" height="15" viewBox="0 0 16 15" fill="none" stroke="#3b7cf2" stroke-width="1.6"><path d="M1 7.5 H14.5 M8.5 1.5 L14.5 7.5 L8.5 13.5"/></svg><svg class="a" style="left:230px;top:58px" width="62" height="56" viewBox="0 0 62 56" fill="none" stroke="#ededed" stroke-width="4.2"><path d="M49 12 A25 25 0 1 0 49 44"/><path d="M26 13 V30 L35 37"/><path d="M40 21 H59 M41 30 H50"/></svg></div><div class="a sc" style="left:1004px;top:73px"><div class="a sct"><i>事</i><i>件</i><i>任</i><i>务</i></div><div class="a scl"><i>前</i><i>往</i></div><svg class="a" style="left:67px;top:76px" width="16" height="15" viewBox="0 0 16 15" fill="none" stroke="#3b7cf2" stroke-width="1.6"><path d="M1 7.5 H14.5 M8.5 1.5 L14.5 7.5 L8.5 13.5"/></svg><svg class="a" style="left:232px;top:59px" width="62" height="56" viewBox="0 0 62 56" fill="none" stroke="#ededed" stroke-width="4.2"><path d="M12 51 A28 28 0 1 1 50 51 Z" stroke-linejoin="round"/><path d="M31 8 V15 M10 30 H17 M45 30 H52 M16 15 L20 19 M46 15 L42 19" /><path d="M31 30 L41 21"/><circle cx="31" cy="30" r="3" fill="#ededed"/></svg></div><div class="a sc" style="left:31px;top:220px"><div class="a sct"><i>终</i><i>端</i><i>设</i><i>置</i></div><div class="a scl"><i>前</i><i>往</i></div><svg class="a" style="left:67px;top:76px" width="16" height="15" viewBox="0 0 16 15" fill="none" stroke="#3b7cf2" stroke-width="1.6"><path d="M1 7.5 H14.5 M8.5 1.5 L14.5 7.5 L8.5 13.5"/></svg><svg class="a" style="left:236px;top:59px" width="56" height="56" viewBox="0 0 56 56" fill="none" stroke="#ededed" stroke-width="4"><rect x="2" y="2" width="52" height="52"/><path d="M13 19 L25 28 L13 37"/><path d="M27 39 H42"/></svg></div><div class="a sc" style="left:355px;top:220px"><div class="a sct"><i>应</i><i>用</i><i>实</i><i>例</i><i>设</i><i>置</i></div><div class="a scl"><i>前</i><i>往</i></div><svg class="a" style="left:67px;top:76px" width="16" height="15" viewBox="0 0 16 15" fill="none" stroke="#3b7cf2" stroke-width="1.6"><path d="M1 7.5 H14.5 M8.5 1.5 L14.5 7.5 L8.5 13.5"/></svg><svg class="a" style="left:234px;top:60px" width="58" height="58" viewBox="0 0 58 58" fill="none" stroke="#ededed" stroke-width="4.5"><rect x="7" y="4.8" width="18" height="18"/><rect x="34" y="4.8" width="18" height="18"/><rect x="34" y="31.3" width="18" height="17.5"/><path d="M13 31.6 V53.5 M2.2 42.5 H24"/></svg></div><div class="a" style="left:510px;top:297px;width:34px;height:34px;border-radius:50%;background:#f5160f;color:#fff;font:19px/35px 'Liberation Sans';text-align:center">1</div>
  </div>
  <div class="a" style="left:2537px;top:447px;width:11px;height:745px;background:#bebebe;border-radius:6px 6px 0 0"></div>
  <div class="a" style="left:2488px;top:100px;width:70px;height:53px;background:#f9f9f9;border-radius:27px 0 0 27px;box-shadow:0 0 6px rgba(0,0,0,.04)"></div>
  <div class="a" style="left:2495px;top:106px;width:42px;height:42px;border-radius:50%;background:#e8b5c4"></div>
  <svg class="a" style="left:2501px;top:112px" width="32" height="32" viewBox="0 0 32 32" fill="none" stroke="#fff" stroke-width="2.8"><path d="M9 2.5 Q10 8.5 16.2 9.7 Q10 11 9 17 Q8 11 1.8 9.7 Q8 8.5 9 2.5Z" fill="#fff" stroke-width="0.8"/><path d="M15 6 H20.5 Q24.5 6 24.5 10 V11.5"/><path d="M15.3 28.5 L21.6 15 L27.9 28.5 M17.6 23.8 H25.6"/><path d="M4.6 17.5 V24.5 Q4.6 27 7 27 H11.5"/></svg>
</div>
<div id="taskbar" class="a">
  <div class="a" style="left:0;top:0;width:2560px;height:72px;background:linear-gradient(180deg,rgba(255,255,255,.03),rgba(0,0,0,.03))"></div>
  <svg class="a" style="left:31px;top:19px" width="35" height="35" viewBox="0 0 35 35"><defs><linearGradient id="wg" x1="0" y1="0" x2="1" y2="1"><stop offset="0" stop-color="#80f0fc"/><stop offset="1" stop-color="#1596f4"/></linearGradient></defs><path d="M1.5 0 H16.5 V16.5 H0 V1.5 Q0 0 1.5 0Z M18.5 0 H33.5 Q35 0 35 1.5 V16.5 H18.5Z M0 18.5 H16.5 V35 H1.5 Q0 35 0 33.5Z M18.5 18.5 H35 V33.5 Q35 35 33.5 35 H18.5Z" fill="url(#wg)"/></svg>
  <div class="a" style="left:88px;top:12px;width:150px;height:48px;border-radius:24px;background:rgba(255,255,255,.1)"></div>
  <svg class="a" style="left:131px;top:26px" width="22" height="22" viewBox="0 0 22 22" fill="none" stroke="#fff" stroke-width="2"><circle cx="8.5" cy="8.5" r="7"/><path d="M13.5 13.5 L20.5 20.5"/></svg>
  <div class="a" style="left:160px;top:25px;font-size:18px;line-height:22px;color:#fff"><i>搜</i><i>索</i></div>
  <!-- settings gear -->
  <svg class="a" style="left:256px;top:19px" width="37" height="35" viewBox="0 0 37 35"><path d="M15 1 H22 L23 6 L27 8 L31.5 5.5 L35.5 11 L32 14.5 V20.5 L35.5 24 L31.5 29.5 L27 27 L23 29 L22 34 H15 L14 29 L10 27 L5.5 29.5 L1.5 24 L5 20.5 V14.5 L1.5 11 L5.5 5.5 L10 8 L14 6Z" fill="#7d8389"/><circle cx="18.5" cy="17.5" r="8.5" fill="#e6e6e6"/><circle cx="18.5" cy="17.5" r="6" fill="#1761c7"/></svg>
  <!-- hex -->
  <svg class="a" style="left:325px;top:19px" width="32" height="35" viewBox="0 0 32 35"><path d="M16 0.5 L31 9 V26 L16 34.5 L1 26 V9Z" fill="#3a3d42" stroke="#1c1d20" stroke-width="1"/><path d="M16 3 L28.5 10.5 V24.5 L16 32 L3.5 24.5 V10.5Z" fill="#2a2c30"/><path d="M17 6 L27 25 L5.5 24 Z" fill="#1f2125"/><path d="M17 6 L5.5 24 L9 23 Z" fill="#c9ced4"/><path d="M5.5 24 L19 26.5 L27 25 L18 24.2Z" fill="#8e959c"/><path d="M17 6 L27 25 L25 16Z" fill="#4a4e54"/></svg>
  <!-- notion -->
  <svg class="a" style="left:392px;top:21px" width="30" height="30" viewBox="0 0 30 30"><path d="M2 4 L21 1.5 L28 6 V26 L9 28.5 L2 24Z" fill="#fff" stroke="#111" stroke-width="2.2" stroke-linejoin="round"/><path d="M2 4 L9 8.5 L28 6 M9 8.5 V28.5" fill="none" stroke="#111" stroke-width="2"/><text x="18.3" y="24.5" font-family="Liberation Serif" font-weight="bold" font-size="17" text-anchor="middle" fill="#000">N</text></svg>
  <!-- vscode -->
  <svg class="a" style="left:455px;top:18px" width="37" height="37" viewBox="0 0 37 37"><path d="M27 36.5 L31 34.7 V27.5 L7.5 10 Q5 8.5 3 10.5 L1.5 12 Q0.5 13.5 2 15 L23 31 Z" fill="#0a6cbd"/><path d="M27 0.5 L31 2.3 V9.5 L7.5 27 Q5 28.5 3 26.5 L1.5 25 Q0.5 23.5 2 22 L23 6 Z" fill="#1d8ae0"/><path d="M27 0.5 L35 4 Q36.5 4.8 36.5 6.5 V30.5 Q36.5 32.2 35 33 L27 36.5 Z" fill="#24a7f2"/></svg>
  <!-- webstorm -->
  <svg class="a" style="left:521px;top:18px" width="36" height="36" viewBox="0 0 36 36"><path d="M0 2 L21 0 L33 4 L36 32 L3 36Z" fill="#21d789"/><path d="M0 2 L21 0 L24 14 L3 20Z" fill="#087cfa"/><path d="M20 2 L33 4 L36 24 L26 20Z" fill="#07c3f2"/><path d="M3 22 L20 36 L3 36Z" fill="#fcf84a"/><rect x="7" y="7" width="22" height="22" fill="#000"/><text x="18" y="17.5" font-family="Liberation Sans" font-weight="bold" font-size="9" text-anchor="middle" fill="#fff">WS</text><rect x="10" y="24" width="8" height="1.6" fill="#fff"/></svg>
  <!-- intellij -->
  <svg class="a" style="left:587px;top:18px" width="36" height="36" viewBox="0 0 36 36"><path d="M0 4 L14 0 L36 1 L34 32 L5 36Z" fill="#fe315d"/><path d="M12 0 L36 1 L34 20 L22 18Z" fill="#087cfa"/><path d="M0 4 L12 2 L6 30 Z" fill="#fc801d"/><path d="M26 26 L34 22 L33 33 L24 34Z" fill="#fc801d"/><rect x="7" y="7" width="22" height="22" fill="#000"/><text x="15" y="17.5" font-family="Liberation Sans" font-weight="bold" font-size="9" text-anchor="middle" fill="#fff">IJ</text><rect x="10" y="24" width="8" height="1.6" fill="#fff"/></svg>
  <!-- edge active -->
  <div class="a" style="left:642px;top:6px;width:58px;height:59px;border-radius:6px;background:rgba(255,255,255,.08);border:1px solid rgba(255,255,255,.07)"></div>
  <svg class="a" style="left:652px;top:18px" width="38" height="37" viewBox="0 0 38 37"><defs><linearGradient id="eg1" x1="0" y1="0" x2="1" y2="1"><stop offset="0" stop-color="#35c1f1"/><stop offset=".6" stop-color="#33bf7c"/><stop offset="1" stop-color="#66eb6e"/></linearGradient><linearGradient id="eg2" x1="0" y1="0" x2="0" y2="1"><stop offset="0" stop-color="#1a8ad6"/><stop offset="1" stop-color="#0c59a4"/></linearGradient></defs><path d="M19 1 C29 1 37 8 37 16 C37 22 32 25 27 25 C22 25 19 23 19 20 C19 18 21 17 21 14 C21 10 16 7 11 8 C6 9 2 13 1 17 C2 8 9 1 19 1Z" fill="url(#eg1)"/><path d="M1 17 C2 11 7 8 12 8 C17 8 21 11 21 14 C21 17 18 18 18 21 C18 27 26 30 33 27 C30 33 24 36 18 36 C8 36 1 28 1 17Z" fill="url(#eg2)"/><path d="M18 21 C18 27 26 30 33 27 C30 32 26 34 22 34 C15 34 13 28 13 24 C13 20 16 17 18 17Z" fill="#0b4f94" opacity=".8"/></svg>
  <div class="a" style="left:659px;top:60px;width:24px;height:5px;border-radius:3px;background:#4cc2ff"></div>
  <!-- netease -->
  <div class="a" style="left:719px;top:18px;width:36px;height:36px;border-radius:7px;background:#f00"></div>
  <svg class="a" style="left:724px;top:22px" width="26" height="28" viewBox="0 0 26 28" fill="none" stroke="#fff" stroke-width="2.6" stroke-linecap="round"><path d="M9 6.5 A9.5 9.5 0 1 0 19 7.5"/><path d="M16 2 Q12 2.5 12.5 7 L14.5 17 Q15.5 21 12 21 Q8.5 21 8.5 16.5 Q8.5 12 13.5 12 Q18 12 18 16"/></svg>
  <!-- todo -->
  <svg class="a" style="left:784px;top:21px" width="38" height="30" viewBox="0 0 38 30"><path d="M1 15 L7.5 8.5 L15 16 L9 22Z" fill="#195abd"/><path d="M9 22 L31 0.5 L37.5 7 L15 29.5 Z" fill="#419eea"/></svg>
  <!-- obs -->
  <svg class="a" style="left:851px;top:18px" width="37" height="37" viewBox="0 0 37 37"><defs><clipPath id="obc"><circle cx="18.5" cy="18.5" r="16.2"/></clipPath></defs><circle cx="18.5" cy="18.5" r="17.6" fill="#fff"/><circle cx="18.5" cy="18.5" r="16.2" fill="#000"/><g clip-path="url(#obc)"><circle cx="18.79" cy="10.30" r="7.40" fill="#fff"/><circle cx="11.26" cy="22.35" r="7.40" fill="#fff"/><circle cx="25.45" cy="22.85" r="7.40" fill="#fff"/><circle cx="22.30" cy="11.92" r="7.40" fill="#000"/><circle cx="10.90" cy="18.50" r="7.40" fill="#000"/><circle cx="22.30" cy="25.08" r="7.40" fill="#000"/></g></svg>
  <div class="a" style="left:865px;top:60px;width:9px;height:5px;border-radius:3px;background:#a8bcc0"></div>
  <!-- typora -->
  <div class="a" style="left:917px;top:19px;width:34px;height:34px;border-radius:7px;background:#fbfbfb;box-shadow:0 1px 2px rgba(0,0,0,.25)"></div>
  <div class="a" style="left:917px;top:19px;width:34px;font:bold 26px/34px 'Liberation Serif',serif;color:#222;text-align:center">T</div>
  <div class="a" style="left:931px;top:60px;width:9px;height:5px;border-radius:3px;background:#a8bcc0"></div>
  <!-- tray -->
  <svg class="a" style="left:1644px;top:30px" width="18" height="11" viewBox="0 0 18 11" fill="none" stroke="#fff" stroke-width="1.6"><path d="M1.5 9.5 L9 2 L16.5 9.5"/></svg>
  <div class="a" style="left:1689px;top:24px;width:24px;height:24px;border-radius:50%;background:linear-gradient(#8bd13a,#2fb24a)"></div>
  <svg class="a" style="left:1693px;top:29px" width="16" height="14" viewBox="0 0 16 14"><path d="M2 1 L5 4 H11 L14 1 V9 Q14 13 8 13 Q2 13 2 9Z" fill="#fff"/><circle cx="6" cy="8" r="1" fill="#3bb548"/><circle cx="10" cy="8" r="1" fill="#3bb548"/></svg>
  <svg class="a" style="left:1736px;top:23px" width="26" height="26" viewBox="0 0 26 26" fill="none" stroke="#fff" stroke-width="1.7"><path d="M6.5 5.5 V4.5 Q6.5 2 9 2 H21 Q23.5 2 23.5 4.5 V15 Q23.5 17.5 21 17.5 H19.5"/><path d="M19 19.5 V21.5 Q19 24 16.5 24 H4.5 Q2 24 2 21.5 V9.5 Q2 7 4.5 7 H6.5"/><rect x="15.27" y="13.54" width="2.4" height="2.4" transform="rotate(22.5 16.47 14.74)" fill="#fff"/><rect x="12.24" y="16.57" width="2.4" height="2.4" transform="rotate(67.5 13.44 17.77)" fill="#fff"/><rect x="7.96" y="16.57" width="2.4" height="2.4" transform="rotate(112.5 9.16 17.77)" fill="#fff"/><rect x="4.93" y="13.54" width="2.4" height="2.4" transform="rotate(157.5 6.13 14.74)" fill="#fff"/><rect x="4.93" y="9.26" width="2.4" height="2.4" transform="rotate(202.5 6.13 10.46)" fill="#fff"/><rect x="7.96" y="6.23" width="2.4" height="2.4" transform="rotate(247.5 9.16 7.43)" fill="#fff"/><rect x="12.24" y="6.23" width="2.4" height="2.4" transform="rotate(292.5 13.44 7.43)" fill="#fff"/><rect x="15.27" y="9.26" width="2.4" height="2.4" transform="rotate(337.5 16.47 10.46)" fill="#fff"/><circle cx="11.3" cy="12.6" r="4.9" fill="#fff" stroke="none"/><circle cx="11.3" cy="12.6" r="3.3" fill="#5d604a" stroke="none"/><circle cx="11.3" cy="12.6" r="2.1" fill="#fff" stroke="none"/></svg>
  <svg class="a" style="left:1786px;top:23px" width="24" height="26" viewBox="0 0 24 26"><path d="M4.5 9 Q4.5 1.5 10.5 1.5 Q16.5 1.5 16.5 9 L17 12 Q19 16 18 21 L16 23 H5 L3 21 Q2 16 4 12 Z" fill="#000"/><ellipse cx="10.5" cy="18" rx="5.5" ry="5.5" fill="#fff"/><ellipse cx="8.6" cy="5.5" rx="1.2" ry="1.7" fill="#fff"/><ellipse cx="12.4" cy="5.5" rx="1.2" ry="1.7" fill="#fff"/><ellipse cx="10.5" cy="8.8" rx="3.5" ry="1.3" fill="#f5a500"/><path d="M3.8 11 Q10.5 13.5 17.2 11 L17.6 13.5 Q10.5 16 3.4 13.5 Z" fill="#e3131b"/><rect x="6" y="13" width="2.2" height="4" fill="#e3131b"/><ellipse cx="6.5" cy="24" rx="3" ry="1.2" fill="#f5a500"/><ellipse cx="14.5" cy="24" rx="3" ry="1.2" fill="#f5a500"/><circle cx="18.5" cy="17.5" r="5" fill="#1e9bf0"/><path d="M17 21.5 L18.5 24.5 L20 21.5Z" fill="#1e9bf0"/><rect x="15.8" y="17" width="1.8" height="1" fill="#bfe3ff"/><rect x="19.4" y="17" width="1.8" height="1" fill="#bfe3ff"/></svg>
  <svg class="a" style="left:1834px;top:25px" width="22" height="22" viewBox="0 0 22 22"><rect x="0.7" y="0.7" width="20.6" height="20.6" fill="#4c5158" stroke="#ecdfc0" stroke-width="1.4"/><rect x="3.5" y="3.5" width="3.8" height="9" fill="#f0541e"/><rect x="7.3" y="3.5" width="3.8" height="9" fill="#ffd400"/><rect x="11.1" y="3.5" width="3.8" height="9" fill="#44c33c"/><rect x="14.9" y="3.5" width="3.6" height="9" fill="#1e8ff0"/><rect x="3.8" y="15" width="3" height="3" fill="#ecdfc0"/><rect x="9.5" y="15" width="3" height="3" fill="#ecdfc0"/><rect x="15.2" y="15" width="3" height="3" fill="#ecdfc0"/></svg>
  <svg class="a" style="left:1883px;top:24px" width="19" height="25" viewBox="0 0 19 25" fill="none" stroke="#80d4f2" stroke-width="1.8"><rect x="5.5" y="1" width="8" height="14" rx="4"/><path d="M1.5 11 Q1.5 19 9.5 19 Q17.5 19 17.5 11 M9.5 19 V24"/></svg>
  <div class="a" style="left:1929px;top:23px;font-size:23px;line-height:26px;color:#fff;text-shadow:0 0 1px #000,0 0 1px #000"><i>中</i></div>
  <div class="a" style="left:1986px;top:24px;width:24px;height:24px;border-radius:50%;background:#19c07a"></div>
  <svg class="a" style="left:1990px;top:28px" width="16" height="16" viewBox="0 0 16 16" fill="none" stroke="#fff" stroke-width="2.4" stroke-linecap="round"><path d="M6 15 L9.5 2.5 Q14 2.5 13.5 6 Q13 9 8.5 8.5 M2 9 Q5 10 8 8"/></svg>
  <svg class="a" style="left:2041px;top:23px" width="27" height="26" viewBox="0 0 27 26" fill="none" stroke="#fff" stroke-width="1.6"><path d="M16 2.3 H4.5 Q2 2.3 2 4.8 V17.7 Q2 20.2 4.5 20.2 H17.5"/><path d="M6.5 23.5 H19.5 M9.5 20.2 V23.5"/><rect x="19" y="1.5" width="5.5" height="9" rx="1.6"/><path d="M21.75 10.5 V25"/></svg>
  <svg class="a" style="left:2077px;top:24px" width="27" height="24" viewBox="0 0 27 24" fill="none" stroke="#fff" stroke-width="1.7" stroke-linejoin="round"><path d="M2.5 8 H6.5 L11.5 3 V20.5 L6.5 15.5 H2.5 Z"/><path d="M14.5 8.5 Q16.8 11.75 14.5 15"/><path d="M17.8 5.5 Q21.5 11.75 17.8 18" opacity=".35"/><path d="M21 2.5 Q26 11.75 21 21" opacity=".35"/></svg>
  <svg class="a" style="left:2113px;top:23px" width="28" height="24" viewBox="0 0 28 24"><rect x="2.8" y="6" width="19.5" height="14.5" rx="3" fill="none" stroke="#fff" stroke-width="1.7"/><rect x="5.3" y="8.5" width="14.5" height="9.5" rx="1" fill="#fff"/><rect x="22.5" y="10.5" width="3" height="5" rx="1" fill="#fff"/><path d="M7 0.5 L2.5 9.5 H6 L4 16 L11.5 6 H8 L10 0.5 Z" fill="#fff" stroke="#46605c" stroke-width="1.2" stroke-linejoin="round"/></svg>
  <!-- clock text -->
  <svg class="a" style="left:2198px;top:15px" width="18" height="18" viewBox="0 0 18 18"><rect x="0.5" y="2" width="17" height="15.5" rx="2" fill="#e7e0ec"/><rect x="0.5" y="2" width="17" height="4" fill="#a99ab8"/><g fill="#8e7fa3"><rect x="3" y="8" width="2.5" height="2"/><rect x="7.5" y="8" width="2.5" height="2"/><rect x="12" y="8" width="2.5" height="2"/><rect x="3" y="12" width="2.5" height="2"/><rect x="7.5" y="12" width="2.5" height="2"/><rect x="12" y="12" width="2.5" height="2"/></g><path d="M4 0.5 V3 M7.5 0.5 V3 M11 0.5 V3 M14.5 0.5 V3" stroke="#888" stroke-width="1"/></svg>
  <div class="a" id="t1" style="left:2219px;top:13px;font-size:17.5px;line-height:22px;color:#fff;white-space:nowrap;transform-origin:0 0">2026<i>年</i>2<i>月</i>05<i>日</i>, <i>周</i><i>四</i> |</div>
  <svg class="a" style="left:2404px;top:15px" width="16" height="18" viewBox="0 0 16 18"><circle cx="8" cy="9.5" r="7" fill="#6b5be0" stroke="#d6d0ff" stroke-width="1.4"/><path d="M8 5 V9.5 L5.5 12" stroke="#fff" stroke-width="1.4" fill="none"/></svg>
  <div class="a" id="t2" style="left:2425px;top:13px;font-size:17.5px;line-height:22px;color:#fff;white-space:nowrap;transform-origin:0 0">01:46:31 <i>上</i><i>午</i></div>
  <div class="a" style="left:2168px;top:38px;width:17px;height:17px;border-radius:3px;background:#1da1f2"></div>
  <svg class="a" style="left:2170px;top:40px" width="13" height="13" viewBox="0 0 13 13"><path d="M6.5 2 L12 11 H1Z" fill="#fff"/></svg>
  <div class="a" id="t3" style="left:2189px;top:37px;font-size:17.5px;line-height:22px;color:#fff;white-space:nowrap;transform-origin:0 0">0.07 MB/s |</div>
  <div class="a" style="left:2286px;top:38px;width:17px;height:17px;border-radius:3px;background:#1da1f2"></div>
  <svg class="a" style="left:2288px;top:40px" width="13" height="13" viewBox="0 0 13 13"><path d="M6.5 11 L12 2 H1Z" fill="#fff"/></svg>
  <div class="a" id="t4" style="left:2307px;top:37px;font-size:17.5px;line-height:22px;color:#fff;white-space:nowrap;transform-origin:0 0">2.92 MB/s |</div>
  <svg class="a" style="left:2402px;top:38px" width="20" height="19" viewBox="0 0 20 19"><path d="M2 8 Q1.5 3 6 1.5 Q9 0 12 1 Q17 1.5 18.5 6 Q19.5 9 19 12 Q18.5 15.5 14.5 16 L15 18.5 L12.5 16.5 Q10.5 16 9 15 Q6 15.5 5 13.5 Q1 13 0.8 10.5 Q0.5 9 2 8Z" fill="#ff69c0"/><path d="M8 2.5 Q9 3 10 2.5 M4 6 Q6 6.5 6.5 8.5 M13 4 Q12.5 6.5 14.5 7 M16.5 8 Q15 10 16.5 12 M5 10 Q7 11 8.5 10 M10 11 Q11.5 12.5 13 11.5" stroke="#e83a9a" stroke-width="1" fill="none"/></svg>
  <div class="a" id="t5" style="left:2424px;top:37px;font-size:17.5px;line-height:22px;color:#fff;white-space:nowrap;transform-origin:0 0">25% |</div>
  <svg class="a" style="left:2476px;top:38px" width="19" height="19" viewBox="0 0 19 19"><defs><linearGradient id="chg" x1="0" y1="0" x2="0" y2="1"><stop offset="0" stop-color="#ffa526"/><stop offset="1" stop-color="#ffe03a"/></linearGradient></defs><rect x="0.5" y="2" width="18" height="17" rx="2" fill="#4a3b78"/><rect x="0.5" y="2" width="18" height="8.5" rx="2" fill="#7a4fc2"/><rect x="2.2" y="2.6" width="14.6" height="7" fill="url(#chg)"/><rect x="10.5" y="0.5" width="4" height="2" rx="1" fill="#2fd06a"/><rect x="3.5" y="6" width="3.5" height="1.6" fill="#f2553a"/><rect x="7.5" y="3.5" width="3.5" height="1.2" rx=".6" fill="#5ab8d8"/><rect x="7" y="13.5" width="5" height="3" fill="#f4eefc"/></svg>
  <div class="a" id="t6" style="left:2497px;top:37px;font-size:17.5px;line-height:22px;color:#fff;white-space:nowrap;transform-origin:0 0">82%</div>
</div>
</body></html>
